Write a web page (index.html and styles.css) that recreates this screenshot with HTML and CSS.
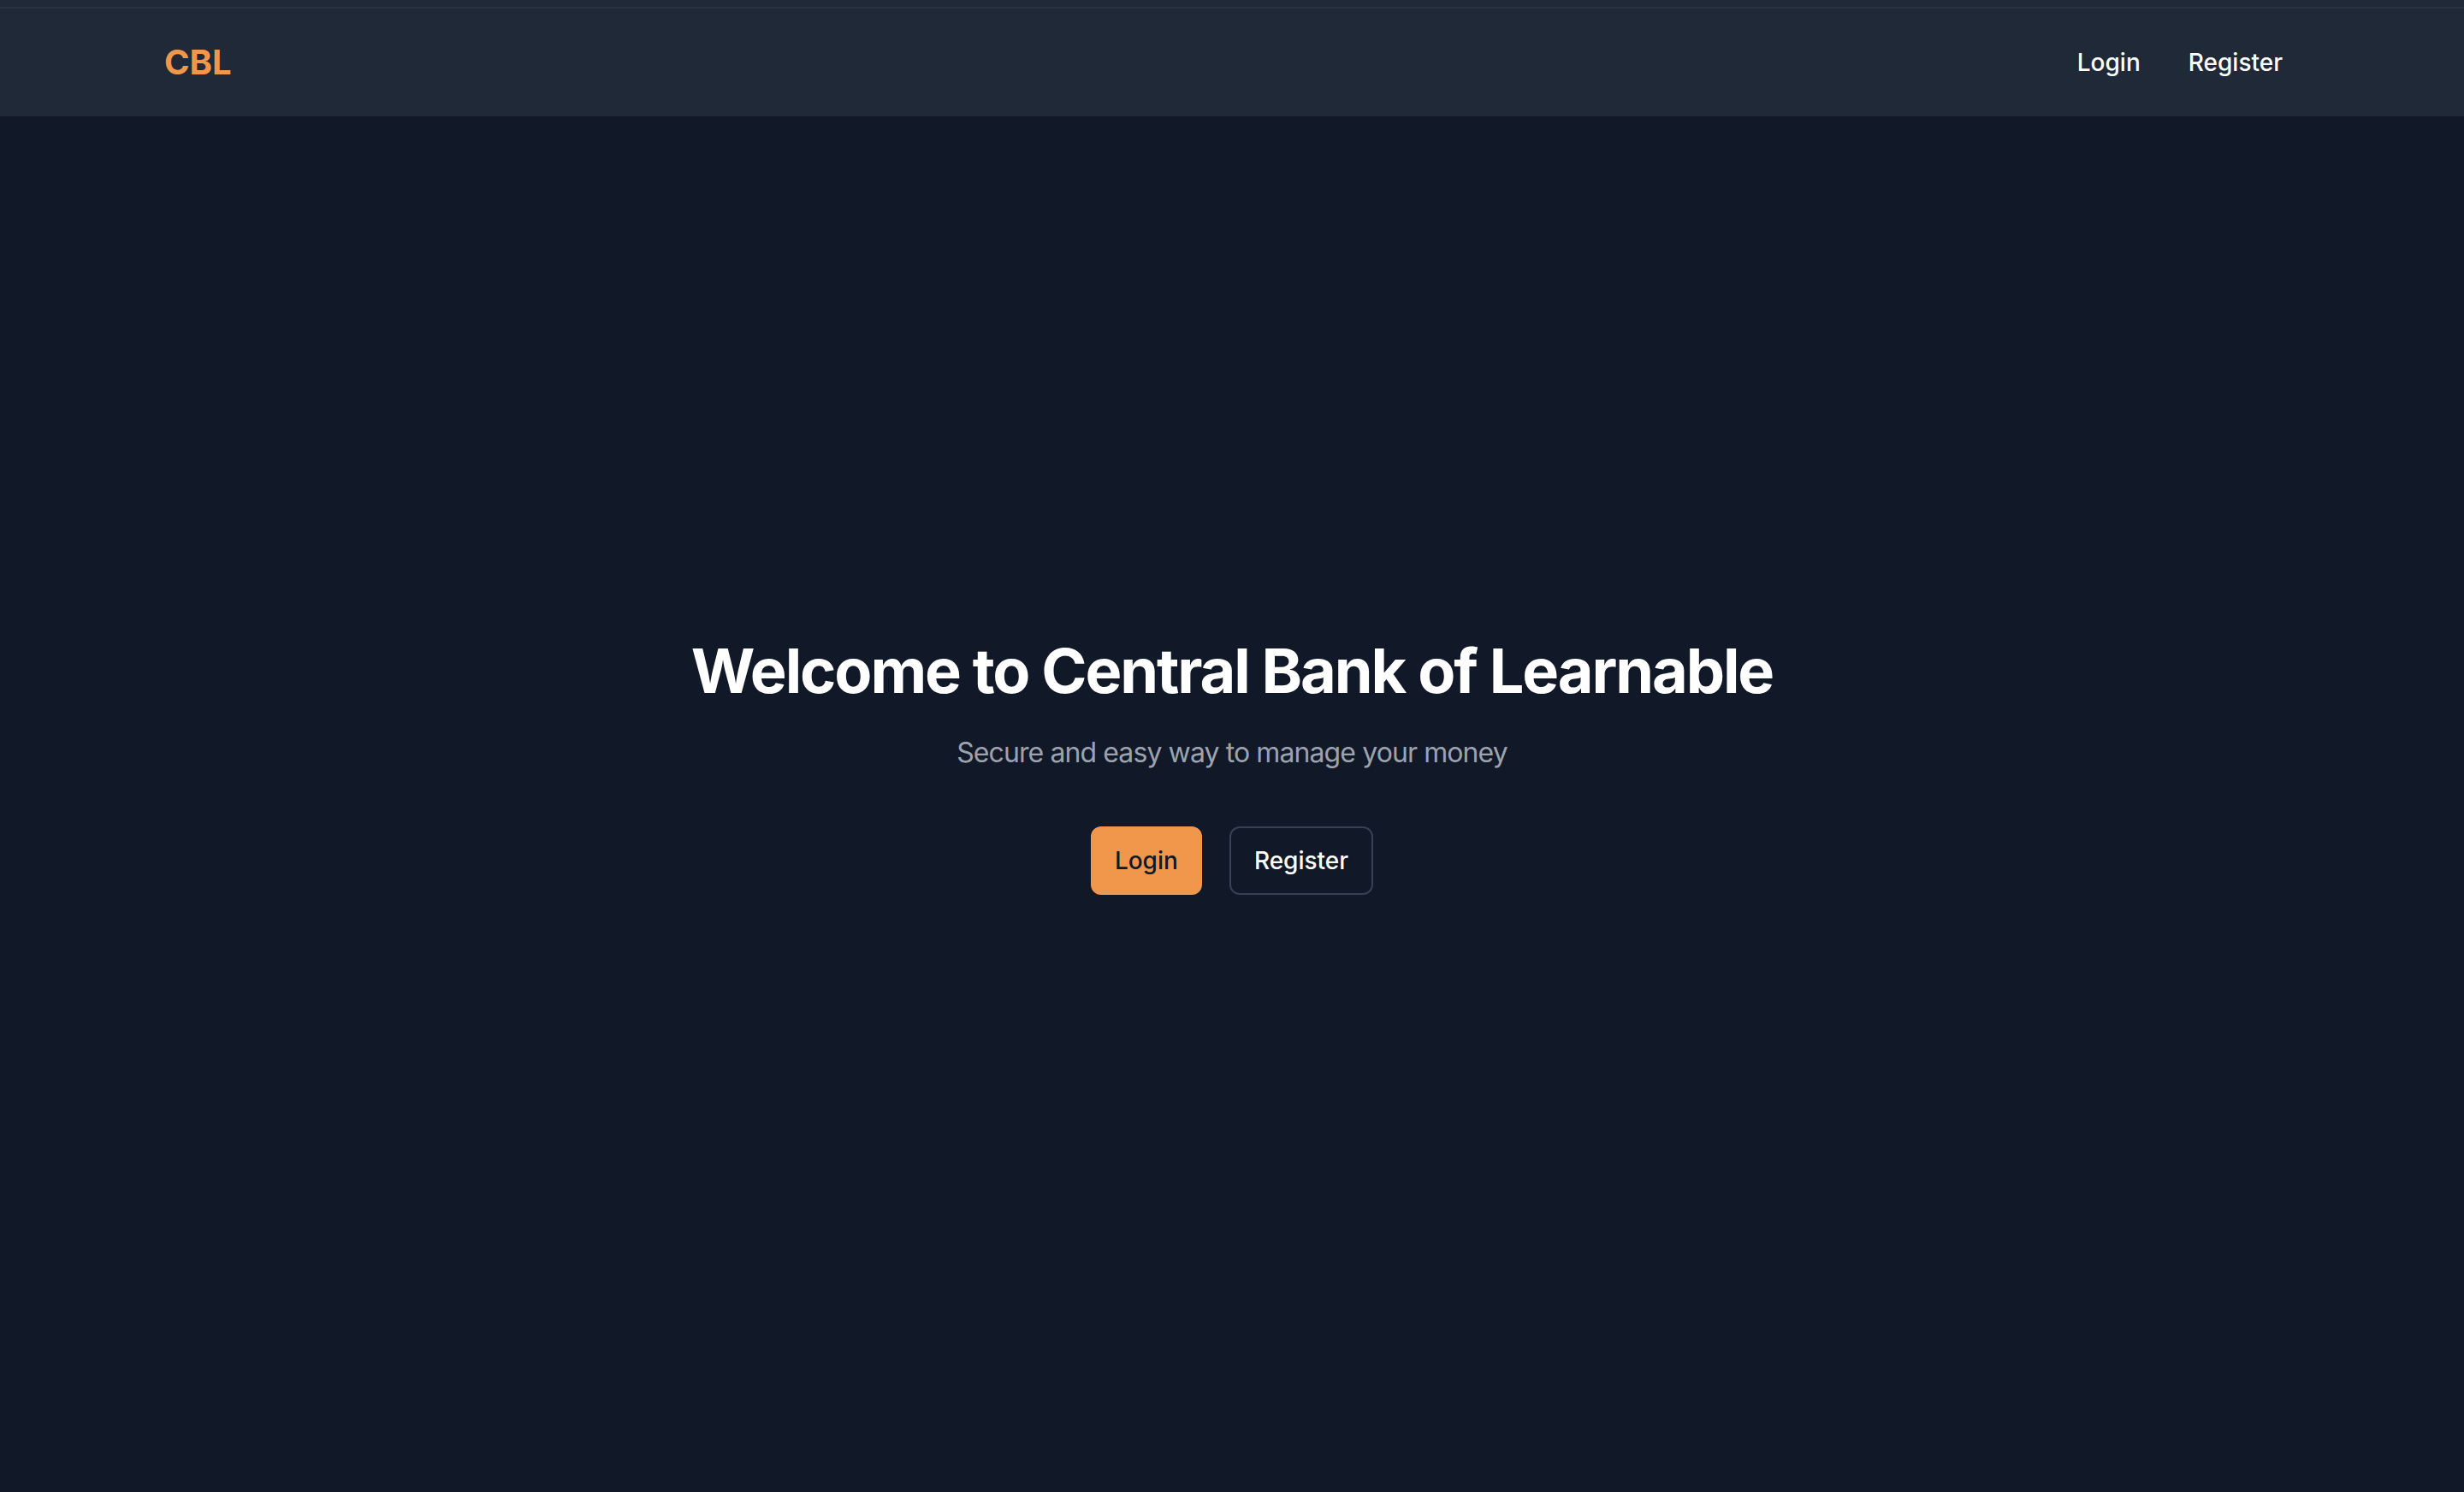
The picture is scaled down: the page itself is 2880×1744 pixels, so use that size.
FILE: index.html
```html
<!DOCTYPE html>
<html lang="en">
<head>
<meta charset="utf-8">
<title>Central Bank of Learnable</title>
<link rel="stylesheet" href="styles.css">
</head>
<body>
<header class="topbar">
  <div class="topbar-inner">
    <a class="brand" href="#">CBL</a>
    <nav class="nav">
      <a class="nav-link" href="#">Login</a>
      <a class="nav-link" href="#">Register</a>
    </nav>
  </div>
</header>
<main class="hero">
  <h1 class="hero-title">Welcome to Central Bank of Learnable</h1>
  <p class="hero-sub">Secure and easy way to manage your money</p>
  <div class="hero-actions">
    <a class="btn btn-primary" href="#">Login</a>
    <a class="btn btn-outline" href="#">Register</a>
  </div>
</main>
</body>
</html>
```

FILE: styles.css
```css
* { box-sizing: border-box; }
html, body {
  margin: 0;
  padding: 0;
}
body {
  background: #111827;
  font-family: Inter, "Noto Sans", sans-serif;
  color: #ffffff;
  min-height: 1744px;
}
a { text-decoration: none; color: inherit; }

.topbar {
  background: linear-gradient(to bottom, #1f2937 0, #1f2937 8px, #2a3342 8px, #2a3342 10px, #1f2937 10px);
  height: 136px;
}
.topbar-inner {
  height: 100%;
  padding: 10px 192px 0 192px;
  display: flex;
  align-items: center;
  justify-content: space-between;
}
.brand {
  color: #f0974c;
  font-weight: 700;
  font-size: 40px;
  line-height: 56px;
}
.nav {
  display: flex;
  gap: 8px;
  margin-right: -4px;
}
.nav-link {
  color: #ffffff;
  font-weight: 500;
  font-size: 28px;
  line-height: 40px;
  padding: 8px 24px;
}

.hero {
  display: flex;
  flex-direction: column;
  align-items: center;
  padding-top: 608px;
}
.hero-title {
  margin: 0;
  font-size: 72px;
  line-height: 80px;
  font-weight: 700;
  letter-spacing: -2.1px;
  color: #ffffff;
}
.hero-sub {
  margin: 32px 0 0 0;
  font-size: 32px;
  line-height: 48px;
  letter-spacing: -0.9px;
  color: #9ca3af;
}
.hero-actions {
  margin-top: 62px;
  display: flex;
  gap: 32px;
}
.btn {
  display: inline-block;
  font-size: 28px;
  line-height: 40px;
  font-weight: 500;
  border-radius: 12px;
  padding: 20px 28px;
}
.btn-primary {
  background: #f0974c;
  color: #111827;
}
.btn-outline {
  border: 2px solid #374151;
  padding: 18px 27px;
  color: #ffffff;
}
```
